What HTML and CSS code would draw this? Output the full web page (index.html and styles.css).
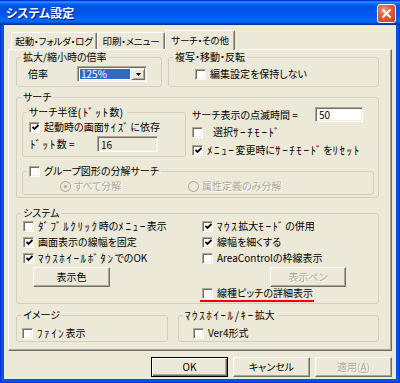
FILE: index.html
```html
<!DOCTYPE html>
<html lang="ja">
<head>
<meta charset="utf-8">
<title>システム設定</title>
<link rel="stylesheet" href="styles.css">
</head>
<body>
<div class="window">
  <div class="titlebar">
    <span class="title">システム設定</span>
    <span class="close"><svg width="11" height="11" viewBox="0 0 11 11"><path d="M1.5 1.5L9.5 9.5M9.5 1.5L1.5 9.5" stroke="#fff" stroke-width="2"/></svg></span>
  </div>
  <div class="client">
    <div class="tabs">
      <div class="tab t1">起動・フォルダ・ログ</div>
      <div class="tab t2">印刷・メニュー</div>
      <div class="tab t3 sel">サーチ・その他</div>
    </div>
    <div class="panel">
      <div class="row r1">
        <div class="g g1"><div class="gt">拡大/縮小時の倍率</div>
          <div class="gc g1c">
            <span class="lbl-rate">倍率</span>
            <div class="combo">
              <span class="combo-val">125%</span>
              <span class="combo-btn"><svg width="5" height="3" viewBox="0 0 5 3"><path d="M0 0H5L2.5 3Z" fill="#000"/></svg></span>
            </div>
          </div>
        </div>
        <div class="g g2"><div class="gt">複写・移動・反転</div>
          <div class="gc g2c">
            <label class="chk"><span class="box"></span>編集設定を保持しない</label>
          </div>
        </div>
      </div>

      <div class="g g3"><div class="gt">サーチ</div>
        <div class="gc g3c">
          <div class="g3top">
            <div class="g g3a"><div class="gt">サーチ半径<span class="h">(ﾄﾞｯﾄ</span>数<span class="h">)</span></div>
              <div class="gc g3ac">
                <label class="chk"><span class="box on"><svg width="7" height="7" viewBox="0 0 7 7"><path d="M0.5 3L2.5 5L6.5 1" stroke="#000" stroke-width="1.8" fill="none"/></svg></span>起動時の画面<span class="h">ｻｲｽﾞ</span>に依存</label>
                <div class="dotrow"><span class="lbl-dot"><span class="h">ﾄﾞｯﾄ</span>数 =</span><span class="tbox tb16">16</span></div>
              </div>
            </div>
            <div class="g3right">
              <div class="blinkrow"><span class="lbl-blink">サーチ表示の点滅時間 =</span><span class="tbox tb50">50</span></div>
              <label class="chk c-sel"><span class="box"></span><span class="pad">選択<span class="h">ｻｰﾁﾓｰﾄﾞ</span></span></label>
              <label class="chk c-reset"><span class="box on"><svg width="7" height="7" viewBox="0 0 7 7"><path d="M0.5 3L2.5 5L6.5 1" stroke="#000" stroke-width="1.8" fill="none"/></svg></span><span class="h">ﾒﾆｭｰ</span>変更時に<span class="h">ｻｰﾁﾓｰﾄﾞ</span>を<span class="h">ﾘｾｯﾄ</span></label>
            </div>
          </div>
          <div class="g g3b"><div class="gt"><label class="chk"><span class="box"></span>グループ図形の分解サーチ</label></div>
            <div class="gc g3bc">
              <span class="radio r-all"><span class="rd on"></span><span class="dis">すべて分解</span></span>
              <span class="radio"><span class="rd"></span><span class="dis">属性定義のみ分解</span></span>
            </div>
          </div>
        </div>
      </div>

      <div class="g g4"><div class="gt">システム</div>
        <div class="gc g4c">
          <div class="col col-l">
            <label class="chk"><span class="box"></span><span class="h">ﾀﾞﾌﾞﾙｸﾘｯｸ</span>時の<span class="h">ﾒﾆｭｰ</span>表示</label>
            <label class="chk"><span class="box on"><svg width="7" height="7" viewBox="0 0 7 7"><path d="M0.5 3L2.5 5L6.5 1" stroke="#000" stroke-width="1.8" fill="none"/></svg></span>画面表示の線幅を固定</label>
            <label class="chk"><span class="box on"><svg width="7" height="7" viewBox="0 0 7 7"><path d="M0.5 3L2.5 5L6.5 1" stroke="#000" stroke-width="1.8" fill="none"/></svg></span><span class="h">ﾏｳｽﾎｲｰﾙﾎﾞﾀﾝ</span>でのOK</label>
            <span class="btn btn-color">表示色</span>
          </div>
          <div class="col col-r">
            <label class="chk"><span class="box on"><svg width="7" height="7" viewBox="0 0 7 7"><path d="M0.5 3L2.5 5L6.5 1" stroke="#000" stroke-width="1.8" fill="none"/></svg></span><span class="h">ﾏｳｽ</span>拡大<span class="h">ﾓｰﾄﾞ</span>の併用</label>
            <label class="chk"><span class="box on"><svg width="7" height="7" viewBox="0 0 7 7"><path d="M0.5 3L2.5 5L6.5 1" stroke="#000" stroke-width="1.8" fill="none"/></svg></span>線幅を細くする</label>
            <label class="chk"><span class="box"></span>AreaControlの枠線表示</label>
            <span class="btn btn-pen"><span class="dis">表示ペン</span></span>
            <label class="chk c-pitch"><span class="box"></span>線種ピッチの詳細表示</label>
            <div class="redline"></div>
          </div>
        </div>
      </div>

      <div class="row r4">
        <div class="g g5"><div class="gt">イメージ</div>
          <div class="gc g5c"><label class="chk"><span class="box"></span><span class="h">ﾌｧｲﾝ</span>表示</label></div>
        </div>
        <div class="g g6"><div class="gt"><span class="h">ﾏｳｽﾎｲｰﾙ/ｷｰ</span>拡大</div>
          <div class="gc g6c"><label class="chk"><span class="box"></span>Ver4形式</label></div>
        </div>
      </div>
    </div>
    <div class="buttons">
      <span class="btn btn-ok">OK</span>
      <span class="btn btn-cancel">キャンセル</span>
      <span class="btn btn-apply"><span class="dis">適用(<u>A</u>)</span></span>
    </div>
  </div>
</div>
</body>
</html>
```
FILE: styles.css
```css
* { box-sizing: border-box; }
html, body { margin: 0; padding: 0; }
body {
  width: 400px;
  height: 383px;
  overflow: hidden;
  background: #fff;
  font-family: "Noto Sans CJK JP", "Noto Sans", sans-serif;
  font-size: 10px;
  line-height: 12px;
  color: #000;
  font-feature-settings: "palt";
}

/* half-width katakana runs */
.h {
  font-feature-settings: normal;
  font-kerning: none;
  font-size: 11px;
  letter-spacing: 1.6px;
  vertical-align: -1px;
}
.pad { padding-left: 6px; }

.window {
  width: 400px;
  height: 383px;
  display: flex;
  flex-direction: column;
  background: #0054E3;
  border: 1px solid #0831D9;
}

.titlebar {
  height: 24px;
  flex: none;
  display: flex;
  align-items: flex-start;
  background: linear-gradient(to bottom, #0058EE 0%, #3593FF 4%, #288EFF 6%, #127DFF 8%, #036FFC 10%, #0262EE 14%, #0057E5 20%, #0054E3 24%, #0055EB 56%, #005BF5 66%, #026AFE 76%, #0062EF 86%, #0052D6 92%, #0040AB 94%, #003092 100%);
  margin: 0 -1px;
  padding-left: 6px;
}
.title {
  color: #fff;
  font-weight: bold;
  font-size: 12px;
  line-height: 14px;
  margin-top: 5px;
  text-shadow: 1px 1px 0 #0A1883;
}
.close {
  margin-left: auto;
  margin-right: 4px;
  margin-top: 3px;
  width: 19px;
  height: 19px;
  border: 1px solid #fff;
  border-radius: 3px;
  background: radial-gradient(circle at 35% 30%, #F0A08A 0%, #E2613F 35%, #C8401F 100%);
  display: flex;
  align-items: center;
  justify-content: center;
}

.client {
  flex: 1;
  margin: 0 3px 3px 3px;
  background: #ECE9D8;
  padding: 0 4px;
  display: flex;
  flex-direction: column;
}

/* tabs */
.tabs {
  height: 24px;
  display: flex;
  align-items: flex-end;
  padding-left: 3px;
  position: relative;
  z-index: 1;
}
.tab {
  height: 17px;
  border-top: 1px solid #fff;
  border-left: 1px solid #fff;
  border-right: 1px solid #716F64;
  box-shadow: inset -1px 0 0 #ACA899;
  border-radius: 2px 2px 0 0;
  display: flex;
  align-items: center;
  justify-content: center;
  background: #ECE9D8;
  white-space: nowrap;
  font-size: 9.5px;
  letter-spacing: -0.2px;
}
.t1 { width: 86px; }
.t2 { width: 68px; }
.t3 { width: 70px; }
.tab.sel {
  height: 20px;
  margin-bottom: -1px;
  padding-bottom: 2px;
}

/* panel */
.panel {
  border-top: 1px solid #fff;
  border-left: 1px solid #fff;
  border-right: 1px solid #716F64;
  border-bottom: 1px solid #716F64;
  box-shadow: inset -1px -1px 0 #ACA899;
  padding: 7px 12px 8px 7px;
  display: flex;
  flex-direction: column;
}

.row { display: flex; }
.r1 { gap: 6px; }
.r4 { gap: 10px; margin-top: 11px; }

/* group boxes */
.g {
  border: 1px solid #D0D0BF;
  border-radius: 3px;
  min-width: 0;
}
.gt {
  width: fit-content;
  height: 12px;
  line-height: 12px;
  margin: -7px 0 0 4px;
  padding: 0 2px;
  background: #ECE9D8;
  white-space: nowrap;
}

.g1 { width: 146px; }
.g1c { display: flex; align-items: center; padding: 3px 0 4px 11px; }
.lbl-rate { width: 49px; }
.combo {
  width: 70px;
  height: 16px;
  border: 1px solid;
  border-color: #ACA899 #fff #fff #ACA899;
  box-shadow: inset 1px 1px 0 #716F64, inset -1px -1px 0 #F1EFE2;
  background: #fff;
  display: flex;
  padding: 2px;
}
.combo-val {
  flex: 1;
  background: #316AC5;
  color: #fff;
  line-height: 10px;
  padding-left: 1px;
  margin-right: 1px;
}
.combo-btn {
  width: 14px;
  margin: -1px -1px -1px 0;
  background: #ECE9D8;
  border: 1px solid;
  border-color: #ECE9D8 #716F64 #716F64 #ECE9D8;
  box-shadow: inset 1px 1px 0 #fff, inset -1px -1px 0 #ACA899;
  display: flex;
  align-items: center;
  justify-content: center;
}

.g2 { flex: 1; }
.g2c { padding: 5px 0 0 26px; }

/* checkbox */
.chk {
  display: flex;
  align-items: center;
  height: 12px;
  white-space: nowrap;
}
.box {
  flex: none;
  width: 11px;
  height: 11px;
  margin-right: 4px;
  background: #fff;
  border: 1px solid;
  border-color: #ACA899 #fff #fff #ACA899;
  box-shadow: inset 1px 1px 0 #716F64, inset -1px -1px 0 #F1EFE2;
  display: flex;
  align-items: center;
  justify-content: center;
}
.box svg { margin: 1px 0 0 1px; }

/* search group */
.g3 { margin-top: 10px; }
.g3c { padding: 9px 4px 2px 5px; }
.g3top { display: flex; align-items: flex-start; }
.g3a { width: 164px; }
.g3ac { padding: 3px 0 4px 6px; }
.dotrow { display: flex; align-items: center; margin-top: 3px; }
.lbl-dot { width: 68px; padding-left: 1px; }
.tbox {
  height: 16px;
  border: 1px solid;
  border-color: #ACA899 #fff #fff #ACA899;
  box-shadow: inset 1px 1px 0 #716F64, inset -1px -1px 0 #F1EFE2;
  padding: 2px 0 0 3px;
  line-height: 11px;
}
.tb16 { width: 61px; background: #ECE9D8; }
.tb50 { width: 48px; height: 15px; background: #fff; padding-top: 1px; }

.g3right { margin-left: 6px; margin-top: -5px; }
.blinkrow { display: flex; align-items: center; height: 15px; }
.lbl-blink { width: 123px; }
.c-sel { margin-top: 4px; }
.c-reset { margin-top: 6px; }

.g3b { margin-top: 14px; }
.g3bc { display: flex; padding: 3px 0 2px 37px; }
.radio { display: flex; align-items: center; height: 12px; white-space: nowrap; }
.r-all { width: 128px; }
.rd {
  flex: none;
  width: 11px;
  height: 11px;
  border-radius: 50%;
  border: 1px solid #ACA899;
  background: #ECE9D8;
  margin-right: 3px;
  display: flex;
  align-items: center;
  justify-content: center;
}
.rd.on::after {
  content: "";
  width: 3px;
  height: 3px;
  border-radius: 50%;
  background: #ACA899;
}
.dis { color: #ACA899; text-shadow: 1px 1px 0 #fff; }

/* system group */
.g4 { margin-top: 15px; }
.g4c { display: flex; padding: 1px 0 1px 6px; }
.col { display: flex; flex-direction: column; gap: 4px; }
.col-l { width: 179px; }
.btn {
  display: flex;
  align-items: center;
  justify-content: center;
  height: 20px;
  background: #ECE9D8;
  border: 1px solid;
  border-color: #fff #716F64 #716F64 #fff;
  box-shadow: inset -1px -1px 0 #ACA899;
  white-space: nowrap;
}
.btn-color { width: 77px; margin-left: 10px; margin-top: -1px; }
.btn-pen { width: 76px; margin-left: 68px; margin-top: -1px; }
.c-pitch { margin-top: -4px; }
.redline {
  width: 114px;
  height: 2px;
  background: #F00000;
  margin: -3px 0 0 -2px;
}

/* bottom groups */
.g5 { width: 152px; }
.g5c { padding: 6px 0 2px 5px; }
.g6 { flex: 1; }
.g6c { padding: 6px 0 2px 14px; }

/* dialog buttons */
.buttons {
  display: flex;
  justify-content: flex-end;
  gap: 5px;
  margin-top: 6px;
}
.buttons .btn { width: 77px; }
.btn-ok {
  border: 1px solid #000;
  box-shadow: inset 1px 1px 0 #fff, inset -1px -1px 0 #716F64, inset -2px -2px 0 #ACA899;
}
.btn-apply u { text-decoration: underline; }
```
